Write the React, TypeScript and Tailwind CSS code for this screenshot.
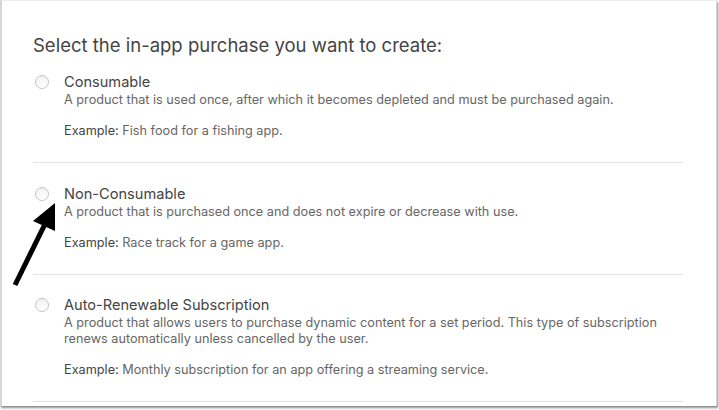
import React from "react";

type Option = {
  title: string;
  desc: string[];
  example: string;
};

const options: Option[] = [
  {
    title: "Consumable",
    desc: ["A product that is used once, after which it becomes depleted and must be purchased again."],
    example: "Fish food for a fishing app.",
  },
  {
    title: "Non-Consumable",
    desc: ["A product that is purchased once and does not expire or decrease with use."],
    example: "Race track for a game app.",
  },
  {
    title: "Auto-Renewable Subscription",
    desc: [
      "A product that allows users to purchase dynamic content for a set period. This type of subscription",
      "renews automatically unless cancelled by the user.",
    ],
    example: "Monthly subscription for an app offering a streaming service.",
  },
];

function Radio() {
  return (
    <div className="h-[14px] w-[14px] shrink-0 rounded-full border border-[#c4c4c4] bg-gradient-to-b from-[#f2f2f2] to-white" />
  );
}

export default function App() {
  return (
    <div
      className="relative h-[410px] w-[719px] overflow-hidden bg-white"
      style={{ fontFamily: 'Inter, "Liberation Sans", Arial, sans-serif' }}
    >
      <div className="h-[406px] w-[717px] border-t border-l-2 border-r border-[#d6d6d6] border-t-[#ececec] bg-white shadow-[1px_2px_2px_rgba(0,0,0,0.45)]">
        <div className="pl-[31px] pr-[33px] pt-[32px]">
          <h1 className="text-[18.5px] leading-[24px] text-[#444]">
            Select the in-app purchase you want to create:
          </h1>
          <div className="mt-[16px]">
            {options.map((o, i) => (
              <div
                key={o.title}
                className={`flex gap-[15px] border-b border-[#e2e2e2] pb-[23px] ${i === 0 ? "" : "pt-[21.5px]"}`}
              >
                <div className="pl-[2px] pt-[2px]">
                  <Radio />
                </div>
                <div className="flex flex-col">
                  <div className="text-[14.6px] leading-[18px] text-[#444]">{o.title}</div>
                  <div className="mt-[1px] text-[12.7px] leading-[16px] text-[#666]">
                    {o.desc.map((d) => (
                      <div key={d}>{d}</div>
                    ))}
                  </div>
                  <div className="mt-[14px] text-[12.7px] leading-[17px] text-[#666]">
                    <span className="text-[#444]">Example:</span> {o.example}
                  </div>
                </div>
              </div>
            ))}
          </div>
        </div>
      </div>
      <svg className="pointer-events-none absolute left-0 top-0" width="719" height="410">
        <line x1="15" y1="285" x2="46" y2="222" stroke="#000" strokeWidth="5" />
        <polygon points="55,203 33,221 55,231" fill="#000" />
      </svg>
    </div>
  );
}
